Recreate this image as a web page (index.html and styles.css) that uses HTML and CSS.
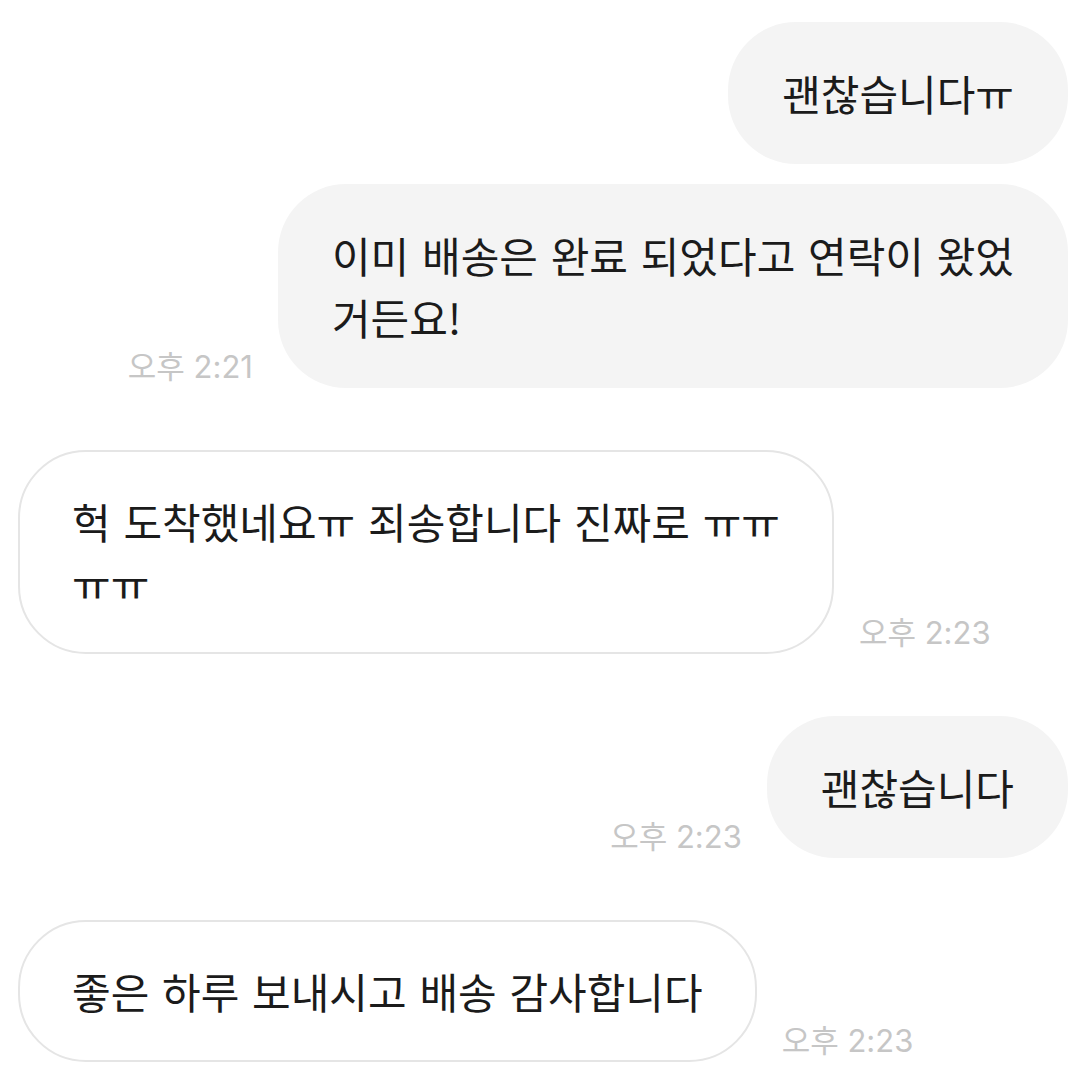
FILE: index.html
```html
<!DOCTYPE html>
<html lang="ko">
<head>
<meta charset="utf-8">
<link rel="stylesheet" href="styles.css">
</head>
<body>
<div class="chat">
  <div class="row sent">
    <div class="bubble sent-bubble">괜찮습니다ㅠ</div>
  </div>
  <div class="row sent tight">
    <span class="time">오후 2:21</span>
    <div class="bubble sent-bubble">이미 배송은 완료 되었다고 연락이 왔었<br>거든요!</div>
  </div>
  <div class="row recv">
    <div class="bubble recv-bubble">헉 도착했네요ㅠ 죄송합니다 진짜로 ㅠㅠ<br>ㅠㅠ</div>
    <span class="time">오후 2:23</span>
  </div>
  <div class="row sent">
    <span class="time">오후 2:23</span>
    <div class="bubble sent-bubble">괜찮습니다</div>
  </div>
  <div class="row recv">
    <div class="bubble recv-bubble">좋은 하루 보내시고 배송 감사합니다</div>
    <span class="time">오후 2:23</span>
  </div>
</div>
</body>
</html>
```

FILE: styles.css
```css
html, body {
  margin: 0;
  padding: 0;
  background: #ffffff;
}

.chat {
  display: flex;
  flex-direction: column;
  padding: 22px 16px 0 18px;
  font-family: "Noto Sans CJK KR", "Noto Sans", sans-serif;
}

.row {
  display: flex;
  align-items: flex-end;
  gap: 25px;
  margin-top: 62px;
}

.row:first-child {
  margin-top: 0;
}

.row.tight {
  margin-top: 20px;
}

.row.sent {
  justify-content: flex-end;
}

.row.recv {
  justify-content: flex-start;
}

.bubble {
  font-size: 42px;
  line-height: 62px;
  word-spacing: 1px;
  color: #1b1b1b;
  padding: 40px 54px;
  border-radius: 68px;
  white-space: nowrap;
}

.sent-bubble {
  background: #f4f4f4;
}

.recv-bubble {
  background: #ffffff;
  border: 2px solid #e5e5e5;
  padding: 38px 52px;
}

.time {
  font-family: "Inter", "Noto Sans CJK KR", sans-serif;
  font-size: 31px;
  line-height: 36px;
  color: #c6c6c6;
  margin-bottom: 3px;
  white-space: nowrap;
}
```
